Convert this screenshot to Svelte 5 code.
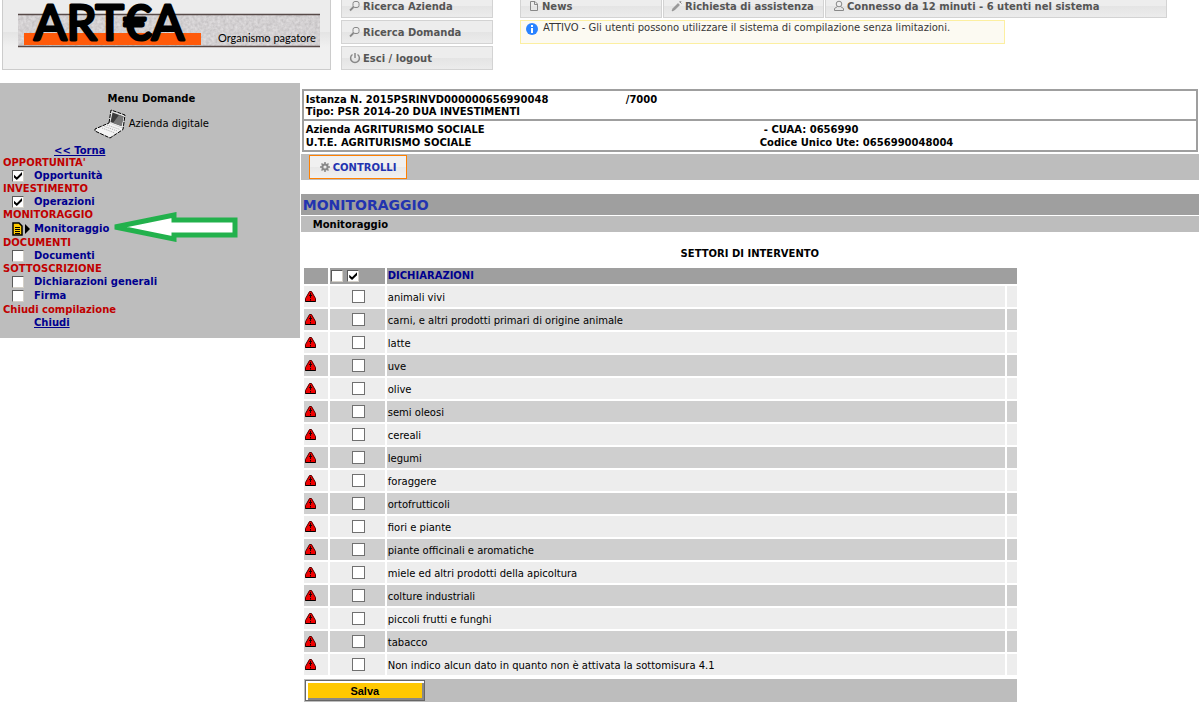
<script lang="ts">
    type MenuItem = { label: string; done: boolean; current?: boolean };
    type MenuGroup = { title: string; items: MenuItem[] };

    let groups: MenuGroup[] = $state([
        { title: "OPPORTUNITA'", items: [{ label: "Opportunità", done: true }] },
        { title: "INVESTIMENTO", items: [{ label: "Operazioni", done: true }] },
        { title: "MONITORAGGIO", items: [{ label: "Monitoraggio", done: false, current: true }] },
        { title: "DOCUMENTI", items: [{ label: "Documenti", done: false }] },
        {
            title: "SOTTOSCRIZIONE",
            items: [
                { label: "Dichiarazioni generali", done: false },
                { label: "Firma", done: false }
            ]
        }
    ]);

    const sectors: string[] = [
        "animali vivi",
        "carni, e altri prodotti primari di origine animale",
        "latte",
        "uve",
        "olive",
        "semi oleosi",
        "cereali",
        "legumi",
        "foraggere",
        "ortofrutticoli",
        "fiori e piante",
        "piante officinali e aromatiche",
        "miele ed altri prodotti della apicoltura",
        "colture industriali",
        "piccoli frutti e funghi",
        "tabacco",
        "Non indico alcun dato in quanto non è attivata la sottomisura 4.1"
    ];

    let selected: boolean[] = $state(sectors.map(() => false));

    function setAll(value: boolean) {
        selected = sectors.map(() => value);
    }
</script>

{#snippet searchIcon()}
    <svg class="icon" viewBox="0 0 12 12" aria-hidden="true">
        <rect x="4" y="1.5" width="6" height="6" rx="2" />
        <path d="M4.5 7 L1 10.5" stroke-width="1.8" />
    </svg>
{/snippet}

<div class="page">
    <header>
        <div class="logo-panel">
            <svg class="logo" viewBox="0 0 304 54" role="img" aria-label="ARTEA Organismo pagatore">
                <defs>
                    <filter id="grain" x="0" y="0" width="100%" height="100%">
                        <feTurbulence type="fractalNoise" baseFrequency="0.35" numOctaves="2" seed="4" />
                        <feColorMatrix values="0.3 0 0 0 0.5  0.3 0 0 0 0.48  0.3 0 0 0 0.49  0 0 0 0 1" />
                    </filter>
                </defs>
                <rect x="0" y="19" width="302" height="33" fill="#aaa5a7" />
                <rect x="0" y="20" width="302" height="31" filter="url(#grain)" />
                <path d="M0 19.5H302M0 51.5H302" stroke="#574a48" stroke-width="1.5" />
                <rect x="6" y="38" width="177" height="12" fill="#ff5a0a" />
                <text class="brand" x="16" y="45">ART€A</text>
                <text class="tagline" x="200" y="47">Organismo pagatore</text>
            </svg>
        </div>

        <nav class="tools">
            <button class="bar-button">{@render searchIcon()}Ricerca Azienda</button>
            <button class="bar-button">{@render searchIcon()}Ricerca Domanda</button>
            <button class="bar-button">
                <svg class="icon" viewBox="0 0 12 12" aria-hidden="true">
                    <path d="M3.5 2.5 A4.4 4.4 0 1 0 8.5 2.5 M6 1V6" stroke-width="1.5" />
                </svg>
                Esci / logout
            </button>
        </nav>

        <div class="status">
            <div class="status-bar">
                <button class="bar-button">
                    <svg class="icon" viewBox="0 0 12 12" aria-hidden="true">
                        <path d="M2.5 1.5H7L9.5 4V10.5H2.5Z M6.5 1.5V4.5H9.5" />
                    </svg>
                    News
                </button>
                <button class="bar-button">
                    <svg class="icon" viewBox="0 0 12 12" aria-hidden="true">
                        <path d="M1 11L2 8.5L7 3.5L8.5 5L3.5 10Z" fill="#999" stroke-width=".6" />
                        <path d="M8.5 1.5L10.5 3.5M10 1L9 3" />
                    </svg>
                    Richiesta di assistenza
                </button>
                <button class="bar-button">
                    <svg class="icon" viewBox="0 0 12 12" aria-hidden="true">
                        <circle cx="6" cy="4" r="2.8" />
                        <path d="M4.5 6.5L1.5 8.5V10.5H10.5V8.5L7.5 6.5" />
                    </svg>
                    Connesso da 12 minuti - 6 utenti nel sistema
                </button>
            </div>
            <p class="notice">
                <svg class="info" viewBox="0 0 12 12" aria-hidden="true">
                    <circle cx="6" cy="6" r="6" fill="#2a83ff" />
                    <path d="M6 2V4M6 5V10" stroke="#fff" stroke-width="2" />
                </svg>
                ATTIVO - Gli utenti possono utilizzare il sistema di compilazione senza limitazioni.
            </p>
        </div>
    </header>

    <div class="body">
        <aside>
            <h2>Menu Domande</h2>
            <p class="digital">
                <svg class="laptop" viewBox="0 0 32 30" aria-hidden="true">
                    <path d="M17 1L31 6L29 19L15 14Z" fill="#e8e8e8" />
                    <path d="M18.5 3.5L29.5 7.5L27.5 17L16.5 13Z" fill="#3c3c3c" />
                    <path d="M25 6L29.5 7.5L27.5 17L19 14Z" fill="#777" />
                    <path d="M15 14L29 19.5V21L16 29L1 22V20Z" fill="#f4f4f4" />
                    <path d="M13 16L26 20.5M10.5 17.5L23.5 22M8 19L21 24" stroke="#aaa" stroke-dasharray="1 1" />
                    <path d="M15 14L17 1L31 6L29 20.5L16 29L1 22V20Z" fill="none" stroke="#000" stroke-dasharray="4 1" />
                </svg>
                Azienda digitale
            </p>
            <a class="back" href="#torna">&lt;&lt; Torna</a>

            {#each groups as group}
                <h3>{group.title}</h3>
                {#each group.items as item}
                    {#if item.current}
                        <div class="entry open">
                            <svg class="current" viewBox="0 0 18 14" aria-hidden="true">
                                <path d="M1 1H7L10 4V13H1Z" fill="#ffcb00" stroke="#000" stroke-width="1.5" />
                                <path d="M3 5.5H8M3 7.5H8M3 9.5H8M3 11.5H8" stroke="#000" />
                                <path d="M13 2L18 7L13 12Z" />
                            </svg>
                            <a href="#monitoraggio">{item.label}</a>
                            <svg class="pointer" viewBox="0 0 126 30" aria-hidden="true">
                                <path
                                    d="M3 15L62 3V8H123V23H62V27Z"
                                    fill="#fff"
                                    stroke="#22b14c"
                                    stroke-width="5"
                                />
                            </svg>
                        </div>
                    {:else}
                        <label class="entry">
                            <input class="sunken" type="checkbox" bind:checked={item.done} />
                            <span>{item.label}</span>
                        </label>
                    {/if}
                {/each}
            {/each}

            <h3 class="closing">Chiudi compilazione</h3>
            <a class="close" href="#chiudi">Chiudi</a>
        </aside>

        <main>
            <section class="request">
                <div class="request-head">
                    <p><span class="number">Istanza N. 2015PSRINVD000000656990048</span><span>/7000</span></p>
                    <p>Tipo: PSR 2014-20 DUA INVESTIMENTI</p>
                </div>
                <div class="company">
                    <span>Azienda AGRITURISMO SOCIALE</span>
                    <span class="cuaa">- CUAA: 0656990</span>
                    <span>U.T.E. AGRITURISMO SOCIALE</span>
                    <span>Codice Unico Ute: 0656990048004</span>
                </div>
            </section>

            <div class="toolbar">
                <button class="controls">
                    <svg class="icon" viewBox="0 0 12 12" aria-hidden="true">
                        <circle cx="6" cy="6" r="2.6" stroke-width="2" />
                        <path d="M6 1V3M6 9V11M1 6H3M9 6H11M2.5 2.5L4 4M8 8L9.5 9.5M9.5 2.5L8 4M4 8L2.5 9.5" stroke-width="1.5" />
                    </svg>
                    CONTROLLI
                </button>
            </div>

            <h1>MONITORAGGIO</h1>
            <p class="subtitle">Monitoraggio</p>

            <h2 class="caption">SETTORI DI INTERVENTO</h2>

            <form class="sheet" onsubmit={(e) => e.preventDefault()}>
                <table>
                    <colgroup>
                        <col class="col-flag" />
                        <col class="col-pick" />
                        <col />
                        <col class="col-tail" />
                    </colgroup>
                    <thead>
                        <tr>
                            <th></th>
                            <th class="pick">
                                <input
                                    class="sunken"
                                    type="checkbox"
                                    aria-label="Deseleziona tutti"
                                    checked={false}
                                    onclick={(e) => { e.preventDefault(); setAll(false); }}
                                />
                                <input
                                    class="sunken"
                                    type="checkbox"
                                    aria-label="Seleziona tutti"
                                    checked={true}
                                    onclick={(e) => { e.preventDefault(); setAll(true); }}
                                />
                            </th>
                            <th colspan="2">DICHIARAZIONI</th>
                        </tr>
                    </thead>
                    <tbody>
                        {#each sectors as sector, i}
                            <tr>
                                <td>
                                    <svg class="alert" viewBox="0 0 11 11" aria-hidden="true">
                                        <path d="M4.5 .5H6.5L10.5 7.5V10.5H.5V7.5Z" fill="#f00000" stroke="#500000" />
                                        <path d="M.5 10.5H10.5" stroke="#000" />
                                        <path d="M5.5 2V7M5.5 8V9.5M4 4.5H7" stroke="#200000" />
                                    </svg>
                                </td>
                                <td class="pick-cell">
                                    <input class="flat" type="checkbox" id="sector-{i}" bind:checked={selected[i]} />
                                </td>
                                <td><label class="sector" for="sector-{i}">{sector}</label></td>
                                <td></td>
                            </tr>
                        {/each}
                    </tbody>
                </table>
                <div class="actions">
                    <button class="save">Salva</button>
                </div>
            </form>
        </main>
    </div>
</div>

<style>
    :global(body) {
        background: #fff;
    }

    .page {
        /* the top strip slides under the window edge */
        margin-top: -6px;
        font-family: Verdana, "DejaVu Sans", sans-serif;
        font-size: 10px;
        line-height: 12px;
        color: #000;
    }

    h1, h2, h3, p {
        margin: 0;
    }

    button, input {
        box-sizing: border-box;
        margin: 0;
        font-family: inherit;
    }

    a {
        color: #00008f;
        font-weight: bold;
    }

    header {
        display: flex;
        padding-left: 2px;
    }

    .logo-panel {
        box-sizing: border-box;
        width: 329px;
        height: 76px;
        padding-left: 15px;
        border: 1px solid #ccc;
        background: linear-gradient(#ececec 50%, #e4e4e4 50%, #f0f0f0 70%);
    }

    .logo {
        display: block;
        width: 304px;
        height: 54px;
    }

    .brand {
        font: 400 48px "Comic Sans MS", Lato, sans-serif;
        stroke: #000;
        stroke-width: 3;
        stroke-linejoin: round;
    }

    .tagline {
        font: 11px "Comic Sans MS", Lato, sans-serif;
    }

    .tools {
        display: flex;
        flex-direction: column;
        gap: 2px;
        width: 152px;
        margin-left: 10px;
    }

    .bar-button {
        display: flex;
        align-items: center;
        height: 24px;
        padding: 0 7px;
        border: 1px solid #d3d3d3;
        background: linear-gradient(#ededed 50%, #e4e4e4 50%, #ececec);
        color: #555;
        font-size: 10px;
        font-weight: bold;
        white-space: nowrap;
    }

    .icon {
        flex: none;
        width: 12px;
        height: 12px;
        margin-right: 2px;
        fill: none;
        stroke: #888;
    }

    .status {
        flex: 1;
        margin-left: 27px;
        margin-right: 32px;
    }

    .status-bar {
        display: grid;
        grid-template-columns: 142fr 161fr 342fr;
        gap: 1px;
    }

    .notice {
        display: flex;
        box-sizing: border-box;
        width: 75%;
        height: 24px;
        margin-top: 2px;
        padding: 1px 5px;
        border: 1px solid #fcefa1;
        background: #fcfaf2;
        color: #363636;
        white-space: nowrap;
    }

    .info {
        width: 12px;
        height: 12px;
        margin: 1px 5px 0 0;
    }

    .body {
        display: flex;
        align-items: flex-start;
        gap: 1px;
        margin-top: 13px;
    }

    aside {
        box-sizing: border-box;
        width: 25%;
        padding: 10px 0 8px 3px;
        background: #bdbdbd;
    }

    aside h2 {
        font-size: 10px;
        text-align: center;
    }

    .digital {
        display: flex;
        align-items: center;
        justify-content: center;
        gap: 3px;
        height: 38px;
        margin-bottom: 2px;
    }

    .laptop {
        width: 32px;
        height: 30px;
    }

    .back {
        display: block;
        width: max-content;
        margin-left: 51px;
    }

    h3 {
        color: #c00000;
        font-size: 10px;
        line-height: 12px;
    }

    .closing {
        margin-top: 1px;
    }

    .close {
        display: block;
        width: max-content;
        margin-left: 31px;
        line-height: 14px;
    }

    .entry {
        display: flex;
        position: relative;
        align-items: center;
        width: max-content;
        height: 14px;
        padding-left: 9px;
        color: #00008f;
        font-weight: bold;
    }

    .entry.open {
        height: 16px;
    }

    .entry a {
        text-decoration: none;
    }

    .entry .sunken {
        margin-right: 10px;
    }

    .current {
        width: 18px;
        height: 14px;
        margin-right: 4px;
    }

    /* callout over the menu, next to the open entry */
    .pointer {
        position: absolute;
        left: 100%;
        top: -9px;
        width: 126px;
        height: 30px;
        margin-left: 3px;
    }

    .sunken, .flat {
        appearance: none;
        display: inline-block;
        position: relative;
        flex: none;
        width: 12px;
        height: 12px;
        background: #fff;
        border: 1px solid;
        border-color: #5a5a5a #d4d0c8 #d4d0c8 #5a5a5a;
    }

    .flat {
        width: 13px;
        height: 13px;
        border-color: #707070;
    }

    .sunken:checked::after, .flat:checked::after {
        content: "";
        position: absolute;
        inset: 1px;
        background: #000;
        clip-path: polygon(0 35%, 35% 65%, 100% 0, 100% 38%, 35% 100%, 0 70%);
    }

    main {
        flex: 1;
        min-width: 0;
    }

    .request {
        margin: 6px 1px 0;
        border: 2px solid #9f9f9f;
        font-weight: bold;
    }

    .request-head {
        padding: 3px 2px 1px;
        border-bottom: 2px solid #9f9f9f;
    }

    .request-head p {
        display: flex;
    }

    .number {
        width: 320px;
    }

    .company {
        display: grid;
        grid-template-columns: 454px auto;
        padding: 2px 2px 1px;
        line-height: 13px;
    }

    .cuaa {
        padding-left: 4px;
    }

    .toolbar {
        margin-top: 2px;
        padding: 1px 8px;
        background: #bdbdbd;
    }

    .controls {
        display: flex;
        align-items: center;
        height: 24px;
        padding: 0 10px 0 9px;
        border: 1px solid #ff8000;
        background: linear-gradient(#f0f0f0 50%, #e8e8e8 50%, #f0f0f0);
        color: #2233b0;
        font-size: 10px;
        font-weight: bold;
    }

    h1 {
        margin-top: 14px;
        padding: 2px 0 0 2px;
        background: #9f9f9f;
        color: #2233b0;
        font-size: 14px;
        line-height: 19px;
    }

    .subtitle {
        margin-top: 1px;
        padding: 2px 0 0 12px;
        background: #bdbdbd;
        font-weight: bold;
        line-height: 14px;
    }

    .caption {
        margin: 16px 0 6px;
        font-size: 10px;
        text-align: center;
    }

    .sheet {
        width: 80%;
        padding-left: 1px;
        box-sizing: border-box;
    }

    table {
        width: 100%;
        border-spacing: 2px;
        table-layout: fixed;
    }

    .col-flag {
        width: 24px;
    }

    .col-pick {
        width: 55px;
    }

    .col-tail {
        width: 10px;
    }

    th, td {
        height: 21px;
        padding: 0 1px;
        text-align: left;
    }

    th {
        height: 16px;
        background: #9f9f9f;
        color: #00008f;
    }

    td {
        background: #ededed;
    }

    tr:nth-child(even) td {
        background: #cfcfcf;
    }

    .sector {
        display: block;
        padding-top: 2px;
    }

    .pick {
        line-height: 0;
    }

    .pick .sunken + .sunken {
        margin-left: 1px;
    }

    .pick-cell {
        padding-left: 3px;
        text-align: center;
        line-height: 0;
    }

    .alert {
        display: block;
        width: 11px;
        height: 11px;
    }

    .actions {
        margin: 2px 2px 0;
        padding: 1px;
        background: #bdbdbd;
    }

    .save {
        display: block;
        width: 120px;
        height: 21px;
        padding: 0;
        border: 1px solid #666;
        background: #ffc800;
        box-shadow: inset 2px 2px #fff, inset -2px -2px #888;
        font: bold 11px "Liberation Sans", Arial, sans-serif;
    }
</style>
